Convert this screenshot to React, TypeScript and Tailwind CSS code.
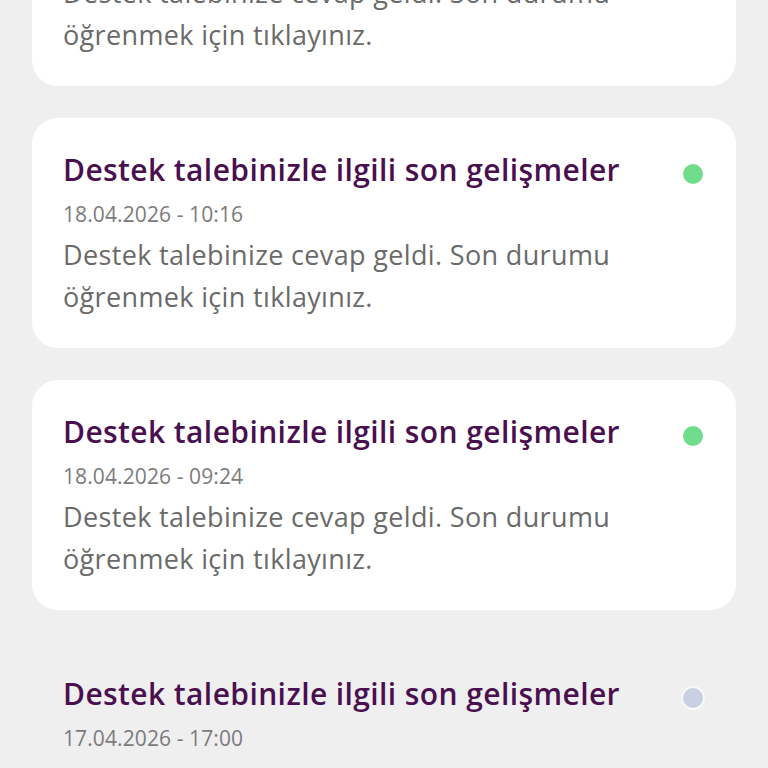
import React from 'react';

type Notice = {
  title: string;
  date: string;
  body: string;
  unread: boolean;
};

const notices: Notice[] = [
  {
    title: 'Destek talebinizle ilgili son gelişmeler',
    date: '18.04.2026 - 11:02',
    body: 'Destek talebinize cevap geldi. Son durumu öğrenmek için tıklayınız.',
    unread: true,
  },
  {
    title: 'Destek talebinizle ilgili son gelişmeler',
    date: '18.04.2026 - 10:16',
    body: 'Destek talebinize cevap geldi. Son durumu öğrenmek için tıklayınız.',
    unread: true,
  },
  {
    title: 'Destek talebinizle ilgili son gelişmeler',
    date: '18.04.2026 - 09:24',
    body: 'Destek talebinize cevap geldi. Son durumu öğrenmek için tıklayınız.',
    unread: true,
  },
  {
    title: 'Destek talebinizle ilgili son gelişmeler',
    date: '17.04.2026 - 17:00',
    body: 'Destek talebinize cevap geldi. Son durumu öğrenmek için tıklayınız.',
    unread: false,
  },
];

const NoticeCard: React.FC<{ n: Notice }> = ({ n }) => (
  <div
    className={
      n.unread
        ? 'rounded-[26px] bg-white pl-[31px] pr-[33px] pt-[32px] pb-[30px]'
        : 'rounded-[26px] bg-transparent pl-[31px] pr-[33px] pt-[32px] pb-[30px]'
    }
  >
    <div className="flex items-start justify-between">
      <h2 className="text-[30px] leading-[40px] font-semibold tracking-[0.4px] text-[#4a0f4f]">{n.title}</h2>
      <span
        className={
          n.unread
            ? 'mt-[14px] h-5 w-5 shrink-0 rounded-full bg-[#6fdd8b]'
            : 'mt-[14px] h-5 w-5 shrink-0 rounded-full bg-[#c9d0e2] ring-2 ring-white/60'
        }
      />
    </div>
    <p className="mt-[10px] text-[21px] leading-[28px] tracking-[0.1px] text-[#7b7b7b]">{n.date}</p>
    <p className="mt-[6px] w-[600px] text-[27px] leading-[42px] tracking-[0.35px] text-[#6a6a6a]">{n.body}</p>
  </div>
);

const App: React.FC = () => {
  return (
    <div
      className="h-screen w-full overflow-hidden bg-[#efefef]"
      style={{ fontFamily: '"Open Sans", "Noto Sans", sans-serif' }}
    >
      <div className="-mt-[144px] flex flex-col gap-8 px-8">
        {notices.map((n, i) => (
          <NoticeCard key={i} n={n} />
        ))}
      </div>
    </div>
  );
};

export default App;
